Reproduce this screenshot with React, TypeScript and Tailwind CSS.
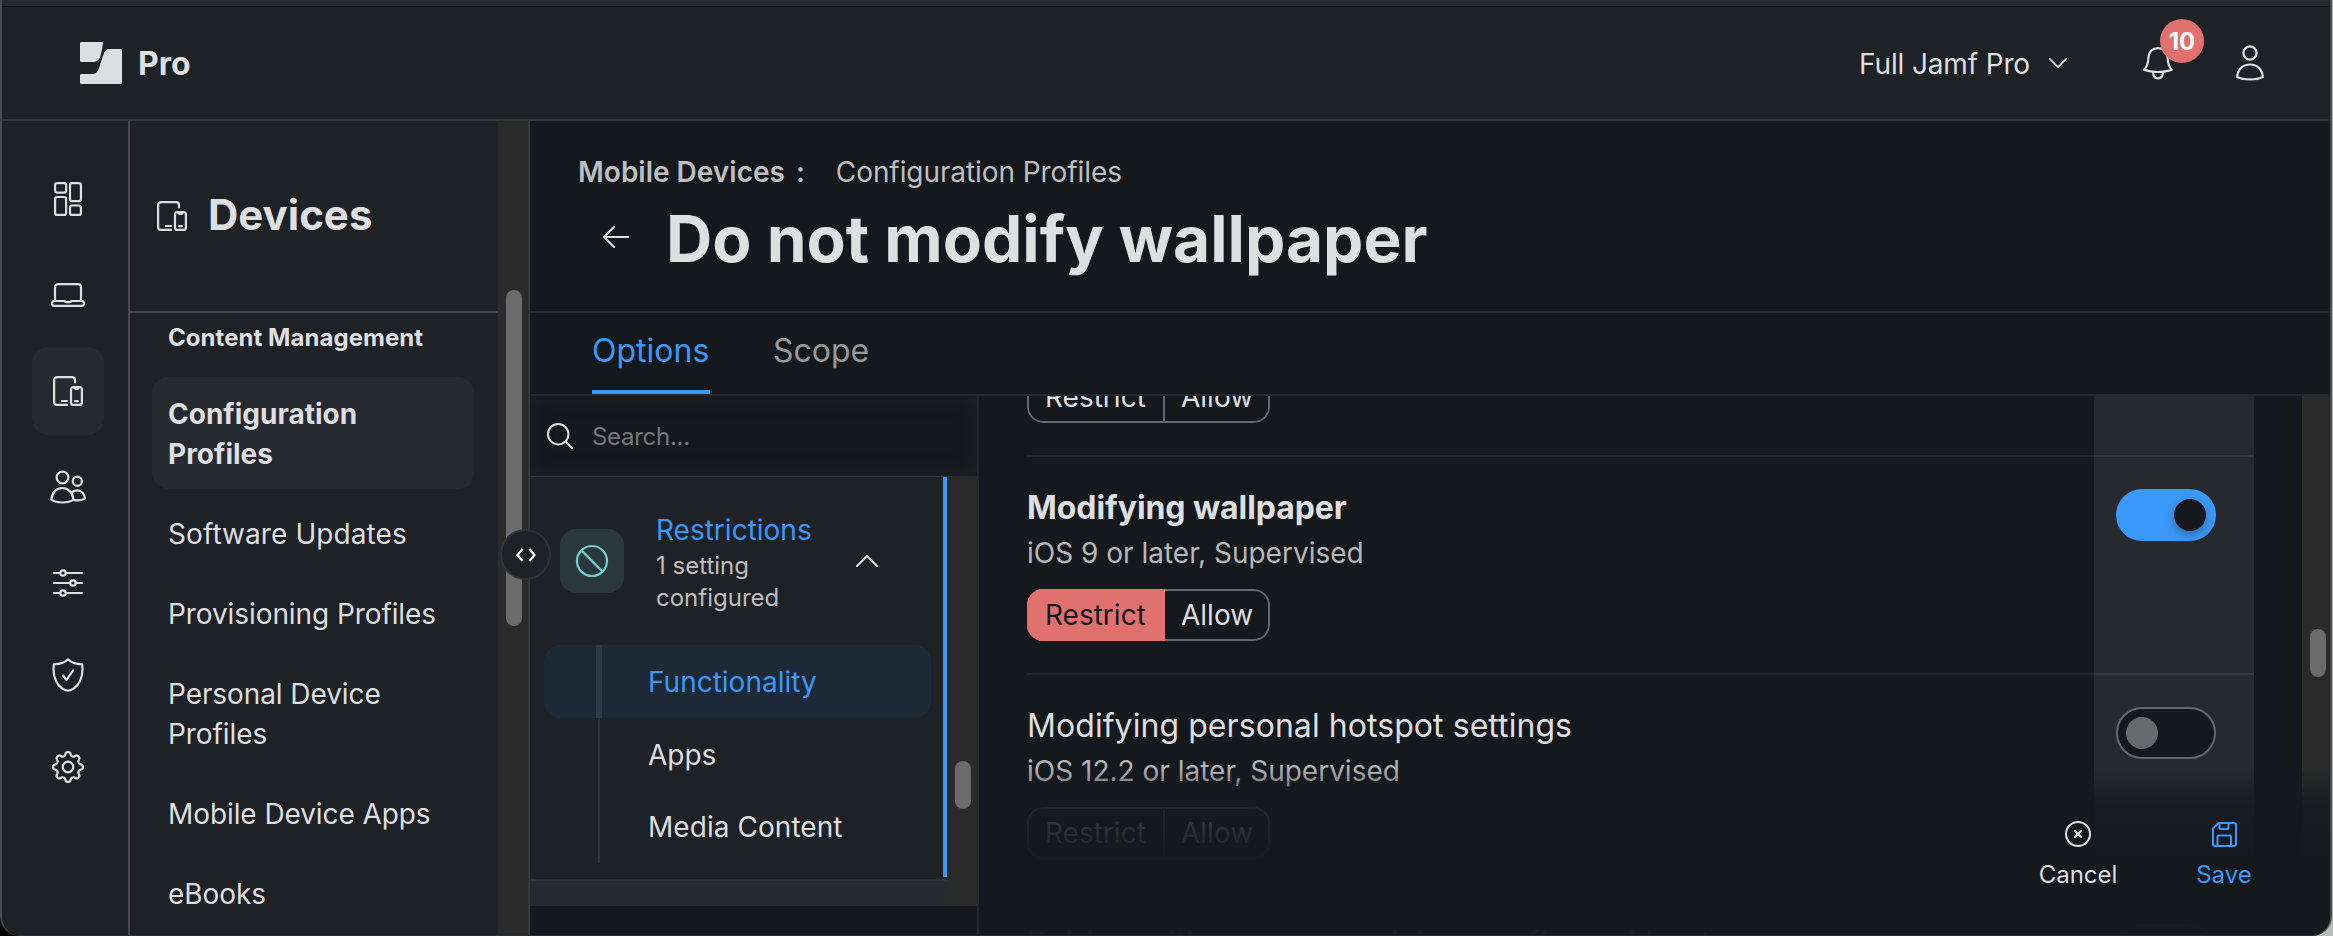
import type { ReactNode } from "react";

type IconProps = { className?: string };

const LogoMark = () => (
  <svg width="42" height="42" viewBox="0 0 42 42" fill="#dddee0">
    <path d="M1.2 0H21.8Q23 0 22.9 1.2C22.4 6 21.6 10 20.4 14C19.2 18 16.8 20 12.5 20H1.2Q0 20 0 18.800V1.200Q0 0 1.200 0Z" />
    <path d="M30 7H40.800Q42 7 42 8.200V40.800Q42 42 40.800 42H1.200Q0 42 0 40.800V33.200Q0 32 1.200 32H11.500C16 32 17.600 30 18.800 26.500L23.400 12.500C24.600 9 26.500 7 30 7Z" />
  </svg>
);

const DashboardIcon = () => (
  <svg width="28" height="34" viewBox="0 0 28 34" fill="none" stroke="currentColor" strokeWidth="2.200">
    <rect x="1.100" y="1.100" width="11" height="9.500" rx="2" />
    <rect x="16" y="1.100" width="10.900" height="18" rx="2" />
    <rect x="1.100" y="15" width="11" height="17.900" rx="2" />
    <rect x="16" y="23.500" width="10.900" height="9.400" rx="2" />
  </svg>
);

const LaptopIcon = () => (
  <svg width="34" height="24" viewBox="0 0 34 24" fill="none" stroke="currentColor" strokeWidth="2.200">
    <path d="M4 17V4.100a3 3 0 0 1 3-3h20a3 3 0 0 1 3 3V17" />
    <path d="M3.100 18H13.500c.5 1 1 1.200 1.800 1.200h3.400c.8 0 1.300-.2 1.800-1.200h10.400a2 2 0 0 1 2 2v.700a2.200 2.200 0 0 1-2.200 2.200H3.300a2.200 2.200 0 0 1-2.200-2.200V20a2 2 0 0 1 2-2Z" />
  </svg>
);

const DevicesIcon = () => (
  <svg width="30" height="30" viewBox="0 0 30 30" fill="none" stroke="currentColor" strokeWidth="2.200" strokeLinecap="round">
    <path d="M22 6.500V4.100a3 3 0 0 0-3-3H4.100a3 3 0 0 0-3 3v21.800a3 3 0 0 0 3 3H14" />
    <path d="M9 25h5" />
    <rect x="18" y="11" width="10.900" height="17.900" rx="2.500" />
    <path d="M21 11.500q.4 1.300 1.500 1.300h2q1.100 0 1.500-1.300M22.200 25.200h2.600" />
  </svg>
);

const PeopleIcon = () => (
  <svg width="36" height="34" viewBox="0 0 36 34" fill="none" stroke="currentColor" strokeWidth="2.200" strokeLinejoin="round">
    <circle cx="12.500" cy="7.500" r="5.900" />
    <circle cx="27.300" cy="11.300" r="4.600" />
    <path d="M1.400 29.500C2 22.500 6.300 18 12.300 18s10.500 4.500 11.100 11.500C21 31.500 17 32.500 12.300 32.500S4 31.500 1.400 29.500Z" />
    <path d="M21.200 22.800C23 21 25 20.400 27.300 20.400c4.200 0 7.200 3.200 7.600 8.200-2.600 1.500-6.800 2-11.300 1.600" />
  </svg>
);

const SlidersIcon = () => (
  <svg width="30" height="28" viewBox="0 0 30 28" fill="none" stroke="currentColor" strokeWidth="2.200" strokeLinecap="round">
    <path d="M1.100 4H7M13 4h15.900M1.100 14H17M23 14h5.900M1.100 24H7M13 24h15.900" />
    <circle cx="10" cy="4" r="2.700" />
    <circle cx="20" cy="14" r="2.700" />
    <circle cx="10" cy="24" r="2.700" />
  </svg>
);

const ShieldIcon = () => (
  <svg width="32" height="34" viewBox="0 0 32 34" fill="none" stroke="currentColor" strokeWidth="2.200" strokeLinejoin="round" strokeLinecap="round">
    <path d="M16 1.300C13 4.500 7.500 6.300 1.900 6.300 0 19 5.500 30.500 16 32.800 26.500 30.500 32 19 30.100 6.300 24.500 6.300 19 4.500 16 1.300Z" />
    <path d="M11 17.500l3.500 4.500 6.500-9.500" />
  </svg>
);

const gearPath =
  Array.from({ length: 160 }, (_, i) => {
    const a = (i / 160) * Math.PI * 2;
    const wave = Math.tanh(1.8 * Math.cos(8 * a)) / Math.tanh(1.8);
    const r = 13.200 + 1.700 * wave;
    return `${i ? "L" : "M"}${(16 + r * Math.sin(a)).toFixed(2)} ${(16 - r * Math.cos(a)).toFixed(2)}`;
  }).join("") + "Z";

const GearIcon = () => (
  <svg width="32" height="32" viewBox="0 0 32 32" fill="none" stroke="currentColor" strokeWidth="2.200" strokeLinejoin="round">
    <path d={gearPath} />
    <circle cx="16" cy="16" r="5.300" />
  </svg>
);

const BellIcon = () => (
  <svg width="30" height="33" viewBox="0 0 30 33" fill="none" stroke="currentColor" strokeWidth="2.200" strokeLinejoin="round">
    <path d="M15 1.100C9.500 1.100 5.600 5 5.400 10.500 5.200 16 4 20 1.200 22.800 5 24.300 9.500 25 15 25s10-.7 13.800-2.200C26 20 24.800 16 24.600 10.500 24.400 5 20.500 1.100 15 1.100Z" />
    <path d="M10 25.200c.2 4 2 6.100 5 6.100s4.800-2.100 5-6.100" />
  </svg>
);

const UserIcon = () => (
  <svg width="28" height="36" viewBox="0 0 28 36" fill="none" stroke="currentColor" strokeWidth="2.200" strokeLinejoin="round">
    <circle cx="14" cy="8" r="6.600" />
    <path d="M1.200 32C1.600 24.500 6.500 19.500 14 19.500S26.400 24.500 26.800 32C23.500 33.700 19.500 34.400 14 34.400S4.500 33.700 1.200 32Z" />
  </svg>
);

const Chevron = ({ className }: IconProps) => (
  <svg className={className} viewBox="0 0 22 12" fill="none" stroke="currentColor" strokeWidth="2" strokeLinecap="round" strokeLinejoin="round">
    <path d="M1 11L11 1L21 11" />
  </svg>
);

const CollapseHandle = () => (
  <button className="absolute left-[-30px] top-[408px] flex size-[51px] items-center justify-center rounded-full border-2 border-[#303338] bg-[#1d2025] text-white">
    <svg width="20" height="14" viewBox="0 0 20 14" fill="none" stroke="currentColor" strokeWidth="2.200">
      <path d="M6.500 1L1.500 7l5 6M13.500 1l5 6-5 6" />
    </svg>
  </button>
);

const railItems: { icon: ReactNode; box: string }[] = [
  { icon: <DashboardIcon />, box: "mt-[34px] h-[88px]" },
  { icon: <LaptopIcon />, box: "mt-[8px] h-[88px]" },
  { icon: <DevicesIcon />, box: "mt-[8px] h-[88px] bg-[#272930]" },
  { icon: <PeopleIcon />, box: "mt-[8px] h-[88px]" },
  { icon: <SlidersIcon />, box: "mt-[8px] h-[88px]" },
  { icon: <ShieldIcon />, box: "mt-[4px] h-[88px]" },
  { icon: <GearIcon />, box: "mt-[4px] h-[88px]" },
];

const Header = () => (
  <header className="flex h-[114px] shrink-0 items-center border-b-2 border-[#34373b] bg-[#1e2125] pr-[66px] pl-[78px]">
    <LogoMark />
    <span className="ml-4 pt-[2px] text-[32px] leading-10 font-bold">Pro</span>
    <div className="ml-auto flex items-center">
      <span className="pt-[2px] text-[28px] leading-10 tracking-[-0.005em]">Full Jamf Pro</span>
      <Chevron className="ml-[19px] h-[10px] w-[18px] rotate-180" />
      <div className="relative ml-[76px]">
        <BellIcon />
        <span className="absolute top-[-28px] left-[17px] flex size-11 items-center justify-center rounded-full bg-[#e0716e] pt-[3px] text-2xl font-bold text-white">
          10
        </span>
      </div>
      <div className="ml-[63px]">
        <UserIcon />
      </div>
    </div>
  </header>
);

const Rail = () => (
  <nav className="flex w-[128px] shrink-0 flex-col items-center border-r-2 border-[#4b494c] bg-[#1e2125] pl-[6px]">
    {railItems.map(({ icon, box }, i) => (
      <div key={i} className={`flex w-[72px] shrink-0 items-center justify-center rounded-2xl ${box}`}>
        {icon}
      </div>
    ))}
  </nav>
);

const NavLink = ({ children }: { children: ReactNode }) => (
  <a className="block py-5 pl-[16px] text-[28px] leading-10 tracking-[-0.003em]">{children}</a>
);

const DevicesPanel = () => (
  <aside className="flex w-[368px] shrink-0 flex-col overflow-hidden bg-[#1e2125]">
    <div className="flex h-[192px] shrink-0 items-center border-b-2 border-[#4b494c] pl-[27px]">
      <DevicesIcon />
      <h2 className="ml-[21px] pb-[2px] text-[42px] leading-[52px] font-bold">Devices</h2>
    </div>
    <div className="px-[22px] pt-[9px]">
      <h3 className="pl-4 text-2xl leading-8 font-bold tracking-[0.002em]">Content Management</h3>
      <a className="mt-[23px] mb-[5px] block w-[322px] rounded-2xl bg-[#272930] pt-[17px] pr-16 pb-[15px] pl-4 text-[28px] leading-10 font-bold">
        Configuration Profiles
      </a>
      <NavLink>
        <span className="tracking-[0.003em]">Software Updates</span>
      </NavLink>
      <NavLink>Provisioning Profiles</NavLink>
      <NavLink>
        Personal Device
        <br />
        Profiles
      </NavLink>
      <NavLink>Mobile Device Apps</NavLink>
      <NavLink>eBooks</NavLink>
    </div>
  </aside>
);

const PageHead = () => (
  <div className="h-[192px] shrink-0 border-b-2 border-[#2a2d31] pt-[31px] pl-12">
    <div className="flex items-center text-[28px] leading-10 text-[#bdbec0]">
      <span className="font-semibold">Mobile Devices</span>
      <span className="ml-[11px] font-semibold">:</span>
      <span className="ml-[31px] tracking-[-0.003em]">Configuration Profiles</span>
    </div>
    <div className="mt-[7px] flex items-center pl-[25px]">
      <svg className="mb-1" width="26" height="22" viewBox="0 0 26 22" fill="none" stroke="currentColor" strokeWidth="2" strokeLinecap="round" strokeLinejoin="round">
        <path d="M25 11H1M11 1L1 11l10 10" />
      </svg>
      <h1 className="ml-[37px] text-[64px] leading-[80px] font-bold">Do not modify wallpaper</h1>
    </div>
  </div>
);

const Tabs = () => (
  <div className="flex h-[83px] shrink-0 items-stretch gap-[63px] border-b-2 border-[#24272b] pl-[62px] text-[32px] leading-[40px]">
    <span className="w-[118px] border-b-4 border-[#3a98f8] pt-[18px] text-[#3a98f8]">Options</span>
    <span className="pt-[18px] text-[#96989a]">Scope</span>
  </div>
);

const PayloadList = () => (
  <div className="flex w-[449px] shrink-0 flex-col border-r-2 border-[#24272b]">
    <div className="flex h-20 shrink-0 items-center bg-[#15181d] pl-[17px] shadow-[inset_0_0_20px_#1e2125]">
      <svg width="26" height="26" viewBox="0 0 26 26" fill="none" stroke="currentColor" strokeWidth="2" strokeLinecap="round">
        <circle cx="11.200" cy="11.200" r="10.200" />
        <path d="M18.600 18.600l6.400 6.400" />
      </svg>
      <span className="ml-[19px] pt-[2px] text-2xl leading-8 tracking-[-0.012em] text-[#76787b]">Search...</span>
    </div>
    <div className="flex h-[430px] shrink-0">
      <div className="w-[417px] shrink-0">
        <div className="h-[405px] border-t border-b-2 border-t-[#35383b] border-b-[#2d3034] bg-[#1e2125]">
          <div className="h-[400px] border-r-4 border-[#3a98f8]">
            <div className="flex h-[168px] items-center pl-[30px]">
              <div className="flex size-16 items-center justify-center rounded-2xl bg-[#2a373c] text-[#6fcfc8]">
                <svg width="34" height="34" viewBox="0 0 34 34" fill="none" stroke="currentColor" strokeWidth="2.200">
                  <circle cx="17" cy="17" r="15" />
                  <path d="M6.400 6.400l21.200 21.200" />
                </svg>
              </div>
              <div className="ml-8 w-[200px] pt-[2px]">
                <div className="text-[28px] leading-10 text-[#3a98f8]">Restrictions</div>
                <div className="text-2xl leading-8 text-[#bdbec0]">
                  1 setting
                  <br />
                  configured
                </div>
              </div>
              <Chevron className="h-3 w-[22px]" />
            </div>
            <div className="pl-[14px] text-[28px] leading-10">
              <div className="flex h-[73px] w-[387px] rounded-2xl bg-[#1e2937] pl-[52px] text-[#3a98f8]">
                <div className="w-[6px] bg-[#2e3a46]" />
                <div className="pt-[17px] pl-[46px]">Functionality</div>
              </div>
              <div className="ml-[54px] flex h-[145px] flex-col border-l-2 border-[#2e3135] pl-[48px]">
                <div className="pt-[17px]">Apps</div>
                <div className="pt-[32px] tracking-[0.002em]">Media Content</div>
              </div>
            </div>
          </div>
        </div>
        <div className="h-[25px] bg-[#26292d]" />
      </div>
      <div className="w-[30px] bg-[#2a2a2a] pt-[285px] pl-2">
        <div className="h-12 w-4 rounded-full bg-[#6b6b6b]" />
      </div>
    </div>
  </div>
);

const Segmented = ({ restricted }: { restricted?: boolean }) => (
  <div className="flex h-[52px] w-[243px] shrink-0 overflow-hidden rounded-2xl text-[28px] leading-[48px]">
    <div
      className={
        restricted
          ? "w-[138px] border-2 border-r-0 border-[#e0716e] bg-[#e0716e] pl-4 text-[#15181d]"
          : "w-[138px] rounded-l-2xl border-2 border-[#65696c] pl-4"
      }
    >
      Restrict
    </div>
    <div className="w-[105px] rounded-r-2xl border-2 border-l-0 border-[#65696c] pl-4">Allow</div>
  </div>
);

const Toggle = ({ on }: { on?: boolean }) => (
  <div
    className={
      on
        ? "flex h-[52px] w-[100px] items-center justify-end rounded-full bg-[#3a98f8] pr-[10px]"
        : "flex h-[52px] w-[100px] items-center rounded-full border-2 border-[#65696c] bg-[#15181d] pl-2"
    }
  >
    <div
      className={
        on
          ? "size-8 rounded-full bg-[#15181d] shadow-[0_4px_8px_rgba(0,0,0,0.3)]"
          : "size-8 rounded-full bg-[#666a6d]"
      }
    />
  </div>
);

const ToggleCell = ({ children }: { children?: ReactNode }) => (
  <div className="w-[160px] shrink-0 border-b-2 border-[#36393e] bg-[#26292d] pt-8 pl-[22px]">{children}</div>
);

type SettingProps = { title: string; note?: string; on?: boolean };

const SettingRow = ({ title, note, on }: SettingProps) => (
  <div className="flex h-[218px] shrink-0">
    <div className="w-[1067px] shrink-0 border-b-2 border-[#24272b] pt-[31px]">
      <div className={on ? "text-[32px] leading-10 font-bold tracking-[-0.002em]" : "text-[32px] leading-10 tracking-[0.002em]"}>
        {title}
      </div>
      {note && (
        <>
          <div className="mt-[5px] mb-4 text-[28px] leading-10 text-[#b6b7b9]">{note}</div>
          <Segmented restricted={on} />
        </>
      )}
    </div>
    <ToggleCell>
      <Toggle on={on} />
    </ToggleCell>
  </div>
);

const Settings = () => (
  <div className="relative flex min-w-0 flex-1 overflow-hidden">
    <div className="flex h-full w-[1323px] shrink-0 flex-col overflow-hidden pl-12">
      <div className="flex h-[61px] shrink-0">
        <div className="flex w-[1067px] shrink-0 flex-col justify-end border-b-2 border-[#24272b] pb-8">
          <Segmented />
        </div>
        <ToggleCell />
      </div>
      <SettingRow title="Modifying wallpaper" note="iOS 9 or later, Supervised" on />
      <SettingRow title="Modifying personal hotspot settings" note="iOS 12.2 or later, Supervised" />
      <SettingRow title="Pairing with non-supervision configured hosts" />
    </div>
    <div className="w-[30px] shrink-0 border-l-2 border-[#2d2d2d] bg-[#2a2a2a] pt-[233px] pl-[6px]">
      <div className="h-12 w-4 rounded-full bg-[#6b6b6b]" />
    </div>
    <footer className="absolute inset-x-0 bottom-0 flex h-[196px] justify-end bg-[linear-gradient(to_bottom,rgba(21,24,29,0)_0px,rgba(21,24,29,0.03)_30px,rgba(21,24,29,0.8)_66px,rgba(21,24,29,0.97)_116px,rgba(21,24,29,0.98)_196px)] pt-[82px] text-2xl leading-8">
      <div className="flex w-20 flex-col items-center">
        <svg width="26" height="26" viewBox="0 0 26 26" fill="none" stroke="currentColor" strokeWidth="2">
          <circle cx="13" cy="13" r="12" />
          <path d="M9.200 9.200l7.600 7.600M16.800 9.200l-7.600 7.600" />
        </svg>
        <span className="mt-3">Cancel</span>
      </div>
      <div className="mr-[78px] ml-[78px] flex w-[56px] flex-col items-center text-[#3a98f8]">
        <svg width="26" height="26" viewBox="0 0 26 26" fill="none" stroke="currentColor" strokeWidth="2" strokeLinejoin="round">
          <path d="M7.500 2H23a2 2 0 0 1 2 2v19a2 2 0 0 1-2 2H4a2 2 0 0 1-2-2V7.500Z" />
          <path d="M8.500 2v5a1 1 0 0 0 1 1h7a1 1 0 0 0 1-1V2M6.500 25V15.500a1 1 0 0 1 1-1h11.500a1 1 0 0 1 1 1V25" />
        </svg>
        <span className="mt-3">Save</span>
      </div>
    </footer>
  </div>
);

export default function App() {
  return (
    <div className="h-[936px] w-[2333px] overflow-hidden bg-[linear-gradient(to_right,#000_50%,#b9b9b9_50%)] font-['Inter',sans-serif] text-[#dedfe0]">
      <div className="flex h-[936px] w-[2332px] flex-col overflow-hidden rounded-b-[20px] border-x-2 border-b border-x-[#4a4b4e] border-b-[#2b2d31] bg-[#15181d]">
        <div className="h-[7px] shrink-0 border-b border-[#0d0e10] bg-[#29282e]" />
        <Header />
        <div className="flex min-h-0 flex-1">
          <Rail />
          <DevicesPanel />
          <div className="w-8 shrink-0 border-r-2 border-[#34373b] bg-[#2a2a2a] pt-[169px] pl-2">
            <div className="h-[336px] w-4 rounded-full bg-[#6b6b6b]" />
          </div>
          <main className="relative flex min-w-0 flex-1 flex-col">
            <PageHead />
            <Tabs />
            <div className="flex min-h-0 flex-1">
              <PayloadList />
              <Settings />
            </div>
            <CollapseHandle />
          </main>
        </div>
      </div>
    </div>
  );
}
